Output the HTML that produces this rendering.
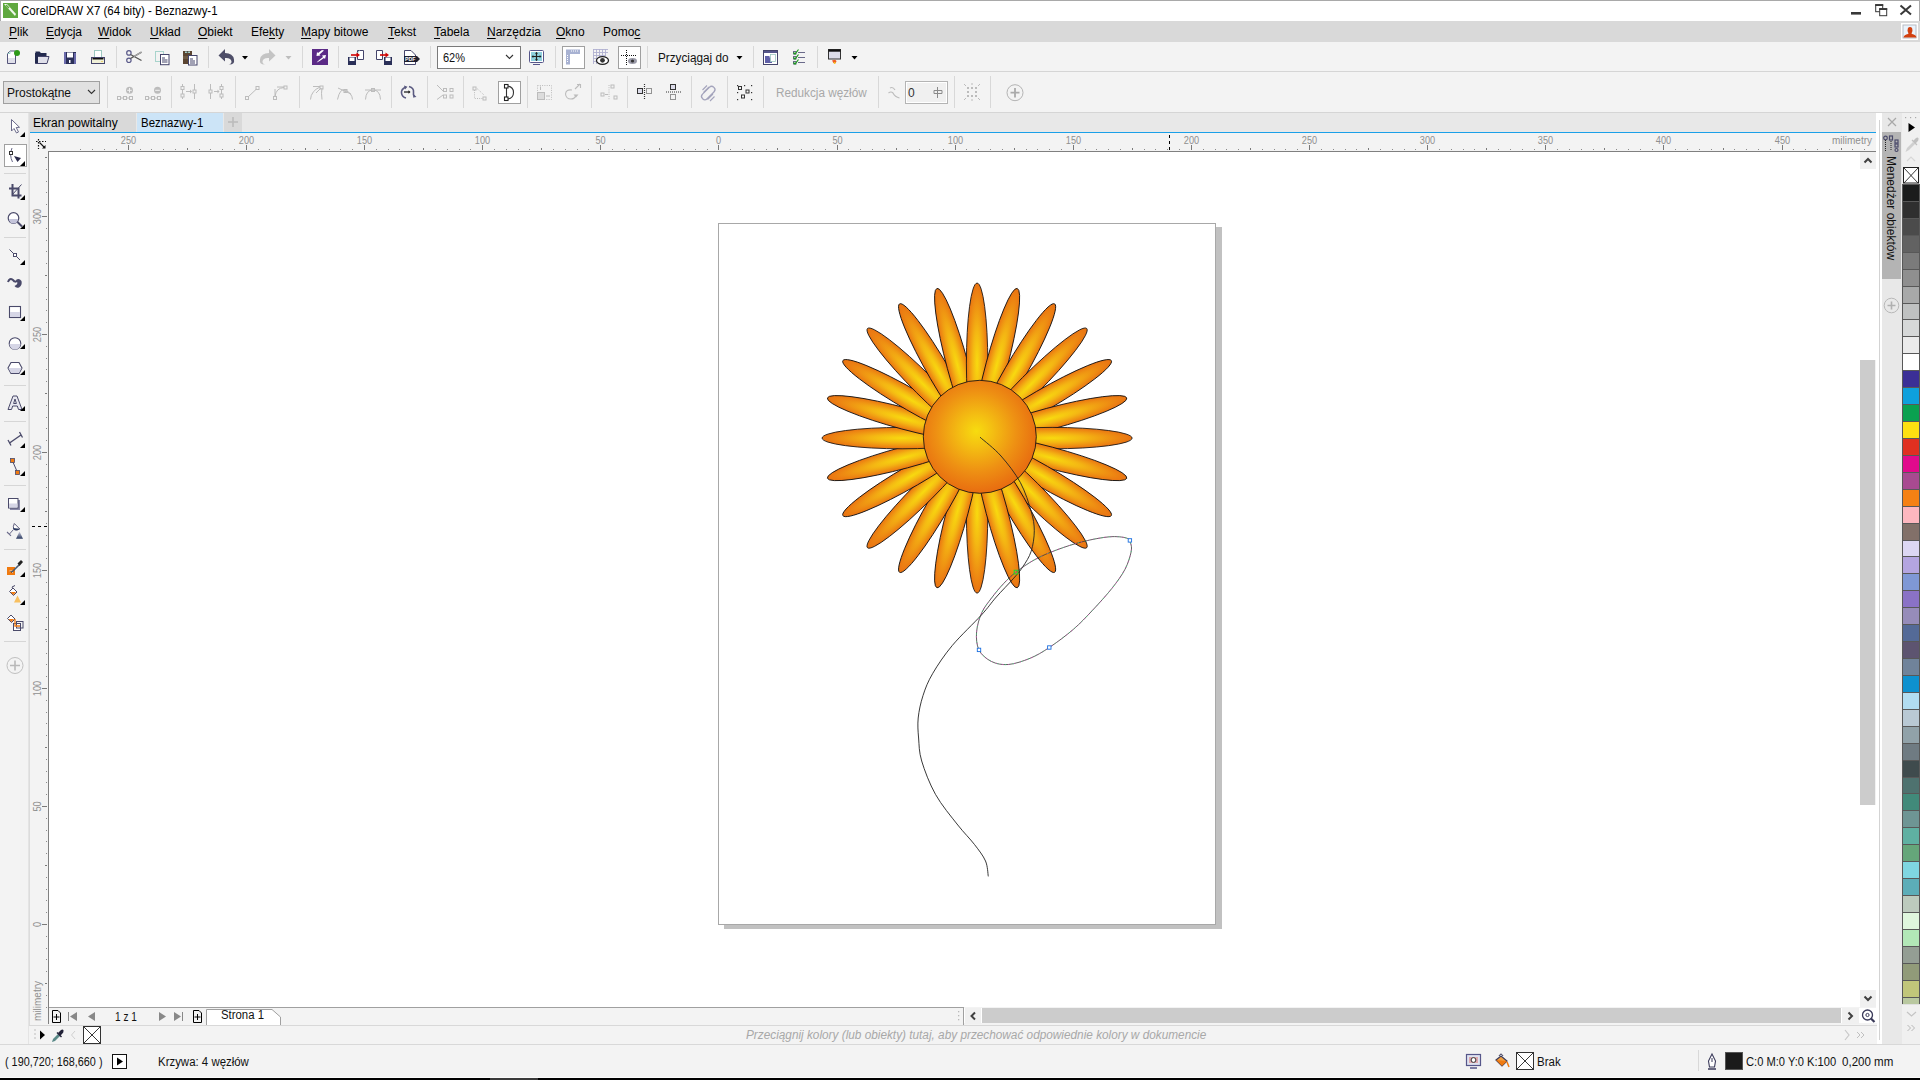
<!DOCTYPE html><html><head><meta charset="utf-8"><style>
html,body{margin:0;padding:0;}
body{width:1920px;height:1080px;position:relative;overflow:hidden;background:#f3f3f3;font-family:"Liberation Sans",sans-serif;font-size:12px;color:#000;}
body div,body span,body svg{position:absolute;}
.t{white-space:nowrap;line-height:1;}
u{text-decoration:underline;text-decoration-thickness:1px;text-underline-offset:2px;}
</style></head><body>
<div style="left:0px;top:0px;width:1920px;height:21px;background:#fff;"></div>
<div style="left:0px;top:0px;width:1920px;height:1px;background:#a9a9a9;"></div>
<div style="left:0px;top:0px;width:1px;height:21px;background:#a9a9a9;"></div>
<svg style="left:3px;top:3px;" width="16" height="16" viewBox="0 0 16 16"><rect x="0" y="0" width="15" height="15" fill="#5fa83f"/><path d="M1 1 L4 1 L13 11 L12 13 Z" fill="#fff" opacity="0.9"/><path d="M3 2 L6 5" stroke="#5fa83f" stroke-width="1.5"/></svg>
<span class="t" style="left:21px;top:5px;font-size:12px;transform:scaleX(0.956);transform-origin:0 0;">CorelDRAW X7 (64 bity) - Beznazwy-1</span>
<svg style="left:1840px;top:0px;" width="80" height="21" viewBox="0 0 80 21"><rect x="11" y="12" width="10" height="2.6" fill="#383838"/><rect x="35.7" y="4.7" width="7" height="7" fill="none" stroke="#383838"/><rect x="35.2" y="4.2" width="8" height="1.8" fill="#383838"/><rect x="39.7" y="8.7" width="7" height="7" fill="#fff" stroke="#383838"/><rect x="39.2" y="8.2" width="8" height="1.8" fill="#383838"/><path d="M60.5 5.5 L71 14.5 M71 5.5 L60.5 14.5" stroke="#383838" stroke-width="2"/></svg>
<div style="left:1919px;top:0px;width:1px;height:21px;background:#a9a9a9;"></div>
<div style="left:0px;top:21px;width:1920px;height:21px;background:#d9d9d9;"></div>
<span class="t" style="left:9px;top:26px;font-size:12px;"><u>P</u>lik</span>
<span class="t" style="left:46px;top:26px;font-size:12px;"><u>E</u>dycja</span>
<span class="t" style="left:98px;top:26px;font-size:12px;"><u>W</u>idok</span>
<span class="t" style="left:150px;top:26px;font-size:12px;"><u>U</u>kład</span>
<span class="t" style="left:198px;top:26px;font-size:12px;"><u>O</u>biekt</span>
<span class="t" style="left:251px;top:26px;font-size:12px;">Efe<u>k</u>ty</span>
<span class="t" style="left:301px;top:26px;font-size:12px;"><u>M</u>apy bitowe</span>
<span class="t" style="left:388px;top:26px;font-size:12px;"><u>T</u>ekst</span>
<span class="t" style="left:434px;top:26px;font-size:12px;"><u>T</u>abela</span>
<span class="t" style="left:487px;top:26px;font-size:12px;"><u>N</u>arzędzia</span>
<span class="t" style="left:556px;top:26px;font-size:12px;"><u>O</u>kno</span>
<span class="t" style="left:603px;top:26px;font-size:12px;">Pomo<u>c</u></span>
<svg style="left:1901px;top:23px;" width="17" height="17" viewBox="0 0 17 17"><rect x="0" y="0" width="17" height="17" fill="#fff"/><rect x="2" y="2" width="13" height="13" fill="#eaf2fb" stroke="#b8bcc4" stroke-width="1"/><ellipse cx="9" cy="7.2" rx="2.4" ry="3.2" fill="#d24010"/><path d="M2.5 14.5 Q3 11.5 7 11 L8 9.5 H10 L11 11 Q15 11.5 15.5 14.5 Z" fill="#d24010"/></svg>
<div style="left:0px;top:42px;width:1920px;height:29px;background:#f3f3f3;"></div>
<div style="left:0px;top:71px;width:1920px;height:1px;background:#d5d5d5;"></div>
<div style="left:116px;top:46px;width:1px;height:22px;background:#d8d8d8;"></div>
<div style="left:208px;top:46px;width:1px;height:22px;background:#d8d8d8;"></div>
<div style="left:302px;top:46px;width:1px;height:22px;background:#d8d8d8;"></div>
<div style="left:338px;top:46px;width:1px;height:22px;background:#d8d8d8;"></div>
<div style="left:430px;top:46px;width:1px;height:22px;background:#d8d8d8;"></div>
<div style="left:555px;top:46px;width:1px;height:22px;background:#d8d8d8;"></div>
<div style="left:647px;top:46px;width:1px;height:22px;background:#d8d8d8;"></div>
<div style="left:753px;top:46px;width:1px;height:22px;background:#d8d8d8;"></div>
<div style="left:817px;top:46px;width:1px;height:22px;background:#d8d8d8;"></div>
<div style="left:0px;top:72px;width:1920px;height:40px;background:#f3f3f3;"></div>
<div style="left:0px;top:112px;width:1920px;height:1px;background:#d5d5d5;"></div>
<div style="left:107px;top:76px;width:1px;height:32px;background:#d8d8d8;"></div>
<div style="left:171px;top:76px;width:1px;height:32px;background:#d8d8d8;"></div>
<div style="left:235px;top:76px;width:1px;height:32px;background:#d8d8d8;"></div>
<div style="left:299px;top:76px;width:1px;height:32px;background:#d8d8d8;"></div>
<div style="left:391px;top:76px;width:1px;height:32px;background:#d8d8d8;"></div>
<div style="left:427px;top:76px;width:1px;height:32px;background:#d8d8d8;"></div>
<div style="left:463px;top:76px;width:1px;height:32px;background:#d8d8d8;"></div>
<div style="left:527px;top:76px;width:1px;height:32px;background:#d8d8d8;"></div>
<div style="left:591px;top:76px;width:1px;height:32px;background:#d8d8d8;"></div>
<div style="left:627px;top:76px;width:1px;height:32px;background:#d8d8d8;"></div>
<div style="left:691px;top:76px;width:1px;height:32px;background:#d8d8d8;"></div>
<div style="left:727px;top:76px;width:1px;height:32px;background:#d8d8d8;"></div>
<div style="left:763px;top:76px;width:1px;height:32px;background:#d8d8d8;"></div>
<div style="left:878px;top:76px;width:1px;height:32px;background:#d8d8d8;"></div>
<div style="left:954px;top:76px;width:1px;height:32px;background:#d8d8d8;"></div>
<div style="left:990px;top:76px;width:1px;height:32px;background:#d8d8d8;"></div>
<div style="left:0px;top:113px;width:29px;height:931px;background:#f3f3f3;"></div>
<div style="left:28px;top:113px;width:1px;height:931px;background:#e4e4e4;"></div>
<div style="left:29px;top:113px;width:1848px;height:19px;background:#e8e8e8;"></div>
<div style="left:29px;top:113px;width:107px;height:19px;background:#d9d9d9;"></div>
<span class="t" style="left:33px;top:117px;">Ekran powitalny</span>
<div style="left:137px;top:113px;width:86px;height:19px;background:#cce4f7;"></div>
<span class="t" style="left:141px;top:117px;transform:scaleX(0.953);transform-origin:0 0;">Beznazwy-1</span>
<div style="left:224px;top:113px;width:18px;height:19px;background:#d9d9d9;"></div>
<svg style="left:227px;top:115px;" width="12" height="14" viewBox="0 0 12 14"><path d="M6 2 V12 M1 7 H11" stroke="#bbb" stroke-width="1.6"/></svg>
<div style="left:29px;top:132px;width:1848px;height:1px;background:#1aa0e8;"></div>
<div style="left:29px;top:133px;width:1848px;height:19px;background:#f3f3f3;"></div>
<div style="left:48px;top:151px;width:1829px;height:1px;background:#808080;"></div>
<div style="left:29px;top:152px;width:19px;height:873px;background:#f3f3f3;"></div>
<div style="left:29px;top:113px;width:1px;height:913px;background:#dcdcdc;"></div>
<div style="left:48px;top:151px;width:1px;height:873px;background:#808080;"></div>
<div style="left:49px;top:152px;width:1811px;height:855px;background:#fff;"></div>
<div style="left:1876px;top:113px;width:6px;height:931px;background:#fff;"></div>
<div style="left:1879px;top:120px;width:1px;height:920px;background:#d3d3d3;"></div>
<div style="left:49px;top:1007px;width:914px;height:1px;background:#a0a0a0;"></div>
<div style="left:49px;top:1008px;width:914px;height:17px;background:#f3f3f3;"></div>
<div style="left:29px;top:1025px;width:1848px;height:1px;background:#d8d8d8;"></div>
<div style="left:29px;top:1026px;width:1848px;height:18px;background:#f3f3f3;"></div>
<div style="left:0px;top:1044px;width:1920px;height:1px;background:#d8d8d8;"></div>
<div style="left:0px;top:1045px;width:1920px;height:33px;background:#f3f3f3;"></div>
<div style="left:0px;top:1077px;width:1920px;height:1px;background:#fbfbfb;"></div>
<div style="left:0px;top:1078px;width:1920px;height:2px;background:#000;"></div>
<div style="left:490px;top:1078px;width:48px;height:2px;background:#3a3a3a;"></div>
<svg style="left:0;top:0" width="1920" height="160" viewBox="0 0 1920 160"><g font-family="Liberation Sans" font-size="10" fill="#8f8f8f"><rect x="80" y="149" width="1" height="1" fill="#8a8a8a"/><rect x="92" y="149" width="1" height="1" fill="#8a8a8a"/><rect x="104" y="149" width="1" height="1" fill="#8a8a8a"/><rect x="116" y="149" width="1" height="1" fill="#8a8a8a"/><rect x="128" y="145" width="1" height="5" fill="#7a7a7a"/><text transform="translate(128.5 144) scale(0.92 1)" text-anchor="middle">250</text><rect x="140" y="149" width="1" height="1" fill="#8a8a8a"/><rect x="151" y="149" width="1" height="1" fill="#8a8a8a"/><rect x="163" y="149" width="1" height="1" fill="#8a8a8a"/><rect x="175" y="149" width="1" height="1" fill="#8a8a8a"/><rect x="187" y="148" width="1" height="2" fill="#7a7a7a"/><rect x="199" y="149" width="1" height="1" fill="#8a8a8a"/><rect x="210" y="149" width="1" height="1" fill="#8a8a8a"/><rect x="222" y="149" width="1" height="1" fill="#8a8a8a"/><rect x="234" y="149" width="1" height="1" fill="#8a8a8a"/><rect x="246" y="145" width="1" height="5" fill="#7a7a7a"/><text transform="translate(246.5 144) scale(0.92 1)" text-anchor="middle">200</text><rect x="258" y="149" width="1" height="1" fill="#8a8a8a"/><rect x="269" y="149" width="1" height="1" fill="#8a8a8a"/><rect x="281" y="149" width="1" height="1" fill="#8a8a8a"/><rect x="293" y="149" width="1" height="1" fill="#8a8a8a"/><rect x="305" y="148" width="1" height="2" fill="#7a7a7a"/><rect x="317" y="149" width="1" height="1" fill="#8a8a8a"/><rect x="329" y="149" width="1" height="1" fill="#8a8a8a"/><rect x="340" y="149" width="1" height="1" fill="#8a8a8a"/><rect x="352" y="149" width="1" height="1" fill="#8a8a8a"/><rect x="364" y="145" width="1" height="5" fill="#7a7a7a"/><text transform="translate(364.5 144) scale(0.92 1)" text-anchor="middle">150</text><rect x="376" y="149" width="1" height="1" fill="#8a8a8a"/><rect x="388" y="149" width="1" height="1" fill="#8a8a8a"/><rect x="399" y="149" width="1" height="1" fill="#8a8a8a"/><rect x="411" y="149" width="1" height="1" fill="#8a8a8a"/><rect x="423" y="148" width="1" height="2" fill="#7a7a7a"/><rect x="435" y="149" width="1" height="1" fill="#8a8a8a"/><rect x="447" y="149" width="1" height="1" fill="#8a8a8a"/><rect x="459" y="149" width="1" height="1" fill="#8a8a8a"/><rect x="470" y="149" width="1" height="1" fill="#8a8a8a"/><rect x="482" y="145" width="1" height="5" fill="#7a7a7a"/><text transform="translate(482.5 144) scale(0.92 1)" text-anchor="middle">100</text><rect x="494" y="149" width="1" height="1" fill="#8a8a8a"/><rect x="506" y="149" width="1" height="1" fill="#8a8a8a"/><rect x="518" y="149" width="1" height="1" fill="#8a8a8a"/><rect x="529" y="149" width="1" height="1" fill="#8a8a8a"/><rect x="541" y="148" width="1" height="2" fill="#7a7a7a"/><rect x="553" y="149" width="1" height="1" fill="#8a8a8a"/><rect x="565" y="149" width="1" height="1" fill="#8a8a8a"/><rect x="577" y="149" width="1" height="1" fill="#8a8a8a"/><rect x="588" y="149" width="1" height="1" fill="#8a8a8a"/><rect x="600" y="145" width="1" height="5" fill="#7a7a7a"/><text transform="translate(600.5 144) scale(0.92 1)" text-anchor="middle">50</text><rect x="612" y="149" width="1" height="1" fill="#8a8a8a"/><rect x="624" y="149" width="1" height="1" fill="#8a8a8a"/><rect x="636" y="149" width="1" height="1" fill="#8a8a8a"/><rect x="648" y="149" width="1" height="1" fill="#8a8a8a"/><rect x="659" y="148" width="1" height="2" fill="#7a7a7a"/><rect x="671" y="149" width="1" height="1" fill="#8a8a8a"/><rect x="683" y="149" width="1" height="1" fill="#8a8a8a"/><rect x="695" y="149" width="1" height="1" fill="#8a8a8a"/><rect x="707" y="149" width="1" height="1" fill="#8a8a8a"/><rect x="718" y="145" width="1" height="5" fill="#7a7a7a"/><text transform="translate(718.5 144) scale(0.92 1)" text-anchor="middle">0</text><rect x="730" y="149" width="1" height="1" fill="#8a8a8a"/><rect x="742" y="149" width="1" height="1" fill="#8a8a8a"/><rect x="754" y="149" width="1" height="1" fill="#8a8a8a"/><rect x="766" y="149" width="1" height="1" fill="#8a8a8a"/><rect x="777" y="148" width="1" height="2" fill="#7a7a7a"/><rect x="789" y="149" width="1" height="1" fill="#8a8a8a"/><rect x="801" y="149" width="1" height="1" fill="#8a8a8a"/><rect x="813" y="149" width="1" height="1" fill="#8a8a8a"/><rect x="825" y="149" width="1" height="1" fill="#8a8a8a"/><rect x="837" y="145" width="1" height="5" fill="#7a7a7a"/><text transform="translate(837.5 144) scale(0.92 1)" text-anchor="middle">50</text><rect x="848" y="149" width="1" height="1" fill="#8a8a8a"/><rect x="860" y="149" width="1" height="1" fill="#8a8a8a"/><rect x="872" y="149" width="1" height="1" fill="#8a8a8a"/><rect x="884" y="149" width="1" height="1" fill="#8a8a8a"/><rect x="896" y="148" width="1" height="2" fill="#7a7a7a"/><rect x="907" y="149" width="1" height="1" fill="#8a8a8a"/><rect x="919" y="149" width="1" height="1" fill="#8a8a8a"/><rect x="931" y="149" width="1" height="1" fill="#8a8a8a"/><rect x="943" y="149" width="1" height="1" fill="#8a8a8a"/><rect x="955" y="145" width="1" height="5" fill="#7a7a7a"/><text transform="translate(955.5 144) scale(0.92 1)" text-anchor="middle">100</text><rect x="966" y="149" width="1" height="1" fill="#8a8a8a"/><rect x="978" y="149" width="1" height="1" fill="#8a8a8a"/><rect x="990" y="149" width="1" height="1" fill="#8a8a8a"/><rect x="1002" y="149" width="1" height="1" fill="#8a8a8a"/><rect x="1014" y="148" width="1" height="2" fill="#7a7a7a"/><rect x="1026" y="149" width="1" height="1" fill="#8a8a8a"/><rect x="1037" y="149" width="1" height="1" fill="#8a8a8a"/><rect x="1049" y="149" width="1" height="1" fill="#8a8a8a"/><rect x="1061" y="149" width="1" height="1" fill="#8a8a8a"/><rect x="1073" y="145" width="1" height="5" fill="#7a7a7a"/><text transform="translate(1073.5 144) scale(0.92 1)" text-anchor="middle">150</text><rect x="1085" y="149" width="1" height="1" fill="#8a8a8a"/><rect x="1096" y="149" width="1" height="1" fill="#8a8a8a"/><rect x="1108" y="149" width="1" height="1" fill="#8a8a8a"/><rect x="1120" y="149" width="1" height="1" fill="#8a8a8a"/><rect x="1132" y="148" width="1" height="2" fill="#7a7a7a"/><rect x="1144" y="149" width="1" height="1" fill="#8a8a8a"/><rect x="1155" y="149" width="1" height="1" fill="#8a8a8a"/><rect x="1167" y="149" width="1" height="1" fill="#8a8a8a"/><rect x="1179" y="149" width="1" height="1" fill="#8a8a8a"/><rect x="1191" y="145" width="1" height="5" fill="#7a7a7a"/><text transform="translate(1191.5 144) scale(0.92 1)" text-anchor="middle">200</text><rect x="1203" y="149" width="1" height="1" fill="#8a8a8a"/><rect x="1215" y="149" width="1" height="1" fill="#8a8a8a"/><rect x="1226" y="149" width="1" height="1" fill="#8a8a8a"/><rect x="1238" y="149" width="1" height="1" fill="#8a8a8a"/><rect x="1250" y="148" width="1" height="2" fill="#7a7a7a"/><rect x="1262" y="149" width="1" height="1" fill="#8a8a8a"/><rect x="1274" y="149" width="1" height="1" fill="#8a8a8a"/><rect x="1285" y="149" width="1" height="1" fill="#8a8a8a"/><rect x="1297" y="149" width="1" height="1" fill="#8a8a8a"/><rect x="1309" y="145" width="1" height="5" fill="#7a7a7a"/><text transform="translate(1309.5 144) scale(0.92 1)" text-anchor="middle">250</text><rect x="1321" y="149" width="1" height="1" fill="#8a8a8a"/><rect x="1333" y="149" width="1" height="1" fill="#8a8a8a"/><rect x="1345" y="149" width="1" height="1" fill="#8a8a8a"/><rect x="1356" y="149" width="1" height="1" fill="#8a8a8a"/><rect x="1368" y="148" width="1" height="2" fill="#7a7a7a"/><rect x="1380" y="149" width="1" height="1" fill="#8a8a8a"/><rect x="1392" y="149" width="1" height="1" fill="#8a8a8a"/><rect x="1404" y="149" width="1" height="1" fill="#8a8a8a"/><rect x="1415" y="149" width="1" height="1" fill="#8a8a8a"/><rect x="1427" y="145" width="1" height="5" fill="#7a7a7a"/><text transform="translate(1427.5 144) scale(0.92 1)" text-anchor="middle">300</text><rect x="1439" y="149" width="1" height="1" fill="#8a8a8a"/><rect x="1451" y="149" width="1" height="1" fill="#8a8a8a"/><rect x="1463" y="149" width="1" height="1" fill="#8a8a8a"/><rect x="1474" y="149" width="1" height="1" fill="#8a8a8a"/><rect x="1486" y="148" width="1" height="2" fill="#7a7a7a"/><rect x="1498" y="149" width="1" height="1" fill="#8a8a8a"/><rect x="1510" y="149" width="1" height="1" fill="#8a8a8a"/><rect x="1522" y="149" width="1" height="1" fill="#8a8a8a"/><rect x="1534" y="149" width="1" height="1" fill="#8a8a8a"/><rect x="1545" y="145" width="1" height="5" fill="#7a7a7a"/><text transform="translate(1545.5 144) scale(0.92 1)" text-anchor="middle">350</text><rect x="1557" y="149" width="1" height="1" fill="#8a8a8a"/><rect x="1569" y="149" width="1" height="1" fill="#8a8a8a"/><rect x="1581" y="149" width="1" height="1" fill="#8a8a8a"/><rect x="1593" y="149" width="1" height="1" fill="#8a8a8a"/><rect x="1604" y="148" width="1" height="2" fill="#7a7a7a"/><rect x="1616" y="149" width="1" height="1" fill="#8a8a8a"/><rect x="1628" y="149" width="1" height="1" fill="#8a8a8a"/><rect x="1640" y="149" width="1" height="1" fill="#8a8a8a"/><rect x="1652" y="149" width="1" height="1" fill="#8a8a8a"/><rect x="1663" y="145" width="1" height="5" fill="#7a7a7a"/><text transform="translate(1663.5 144) scale(0.92 1)" text-anchor="middle">400</text><rect x="1675" y="149" width="1" height="1" fill="#8a8a8a"/><rect x="1687" y="149" width="1" height="1" fill="#8a8a8a"/><rect x="1699" y="149" width="1" height="1" fill="#8a8a8a"/><rect x="1711" y="149" width="1" height="1" fill="#8a8a8a"/><rect x="1723" y="148" width="1" height="2" fill="#7a7a7a"/><rect x="1734" y="149" width="1" height="1" fill="#8a8a8a"/><rect x="1746" y="149" width="1" height="1" fill="#8a8a8a"/><rect x="1758" y="149" width="1" height="1" fill="#8a8a8a"/><rect x="1770" y="149" width="1" height="1" fill="#8a8a8a"/><rect x="1782" y="145" width="1" height="5" fill="#7a7a7a"/><text transform="translate(1782.5 144) scale(0.92 1)" text-anchor="middle">450</text><rect x="1793" y="149" width="1" height="1" fill="#8a8a8a"/><rect x="1805" y="149" width="1" height="1" fill="#8a8a8a"/><rect x="1817" y="149" width="1" height="1" fill="#8a8a8a"/><rect x="1829" y="149" width="1" height="1" fill="#8a8a8a"/><rect x="1841" y="148" width="1" height="2" fill="#7a7a7a"/><rect x="1852" y="149" width="1" height="1" fill="#8a8a8a"/><rect x="1864" y="149" width="1" height="1" fill="#8a8a8a"/><text x="1872" y="144" text-anchor="end">milimetry</text></g></svg>
<svg style="left:1169px;top:135px" width="1" height="16"><path d="M0.5 0 V16" stroke="#000" stroke-width="1" stroke-dasharray="3,3"/></svg>
<svg style="left:0;top:0" width="60" height="1030" viewBox="0 0 60 1030"><g font-family="Liberation Sans" font-size="10" fill="#8f8f8f"><rect x="46" y="1007" width="1" height="1" fill="#8a8a8a"/><rect x="46" y="995" width="1" height="1" fill="#8a8a8a"/><rect x="45" y="983" width="2" height="1" fill="#7a7a7a"/><rect x="46" y="971" width="1" height="1" fill="#8a8a8a"/><rect x="46" y="959" width="1" height="1" fill="#8a8a8a"/><rect x="46" y="948" width="1" height="1" fill="#8a8a8a"/><rect x="46" y="936" width="1" height="1" fill="#8a8a8a"/><rect x="42" y="924" width="5" height="1" fill="#7a7a7a"/><text transform="translate(41 924.5) rotate(-90) scale(0.92 1)" text-anchor="middle">0</text><rect x="46" y="912" width="1" height="1" fill="#8a8a8a"/><rect x="46" y="900" width="1" height="1" fill="#8a8a8a"/><rect x="46" y="889" width="1" height="1" fill="#8a8a8a"/><rect x="46" y="877" width="1" height="1" fill="#8a8a8a"/><rect x="45" y="865" width="2" height="1" fill="#7a7a7a"/><rect x="46" y="853" width="1" height="1" fill="#8a8a8a"/><rect x="46" y="841" width="1" height="1" fill="#8a8a8a"/><rect x="46" y="830" width="1" height="1" fill="#8a8a8a"/><rect x="46" y="818" width="1" height="1" fill="#8a8a8a"/><rect x="42" y="806" width="5" height="1" fill="#7a7a7a"/><text transform="translate(41 806.5) rotate(-90) scale(0.92 1)" text-anchor="middle">50</text><rect x="46" y="794" width="1" height="1" fill="#8a8a8a"/><rect x="46" y="782" width="1" height="1" fill="#8a8a8a"/><rect x="46" y="771" width="1" height="1" fill="#8a8a8a"/><rect x="46" y="759" width="1" height="1" fill="#8a8a8a"/><rect x="45" y="747" width="2" height="1" fill="#7a7a7a"/><rect x="46" y="735" width="1" height="1" fill="#8a8a8a"/><rect x="46" y="723" width="1" height="1" fill="#8a8a8a"/><rect x="46" y="712" width="1" height="1" fill="#8a8a8a"/><rect x="46" y="700" width="1" height="1" fill="#8a8a8a"/><rect x="42" y="688" width="5" height="1" fill="#7a7a7a"/><text transform="translate(41 688.5) rotate(-90) scale(0.92 1)" text-anchor="middle">100</text><rect x="46" y="676" width="1" height="1" fill="#8a8a8a"/><rect x="46" y="664" width="1" height="1" fill="#8a8a8a"/><rect x="46" y="653" width="1" height="1" fill="#8a8a8a"/><rect x="46" y="641" width="1" height="1" fill="#8a8a8a"/><rect x="45" y="629" width="2" height="1" fill="#7a7a7a"/><rect x="46" y="617" width="1" height="1" fill="#8a8a8a"/><rect x="46" y="605" width="1" height="1" fill="#8a8a8a"/><rect x="46" y="594" width="1" height="1" fill="#8a8a8a"/><rect x="46" y="582" width="1" height="1" fill="#8a8a8a"/><rect x="42" y="570" width="5" height="1" fill="#7a7a7a"/><text transform="translate(41 570.5) rotate(-90) scale(0.92 1)" text-anchor="middle">150</text><rect x="46" y="558" width="1" height="1" fill="#8a8a8a"/><rect x="46" y="546" width="1" height="1" fill="#8a8a8a"/><rect x="46" y="535" width="1" height="1" fill="#8a8a8a"/><rect x="46" y="523" width="1" height="1" fill="#8a8a8a"/><rect x="45" y="511" width="2" height="1" fill="#7a7a7a"/><rect x="46" y="499" width="1" height="1" fill="#8a8a8a"/><rect x="46" y="487" width="1" height="1" fill="#8a8a8a"/><rect x="46" y="476" width="1" height="1" fill="#8a8a8a"/><rect x="46" y="464" width="1" height="1" fill="#8a8a8a"/><rect x="42" y="452" width="5" height="1" fill="#7a7a7a"/><text transform="translate(41 452.5) rotate(-90) scale(0.92 1)" text-anchor="middle">200</text><rect x="46" y="440" width="1" height="1" fill="#8a8a8a"/><rect x="46" y="428" width="1" height="1" fill="#8a8a8a"/><rect x="46" y="417" width="1" height="1" fill="#8a8a8a"/><rect x="46" y="405" width="1" height="1" fill="#8a8a8a"/><rect x="45" y="393" width="2" height="1" fill="#7a7a7a"/><rect x="46" y="381" width="1" height="1" fill="#8a8a8a"/><rect x="46" y="369" width="1" height="1" fill="#8a8a8a"/><rect x="46" y="358" width="1" height="1" fill="#8a8a8a"/><rect x="46" y="346" width="1" height="1" fill="#8a8a8a"/><rect x="42" y="334" width="5" height="1" fill="#7a7a7a"/><text transform="translate(41 334.5) rotate(-90) scale(0.92 1)" text-anchor="middle">250</text><rect x="46" y="322" width="1" height="1" fill="#8a8a8a"/><rect x="46" y="310" width="1" height="1" fill="#8a8a8a"/><rect x="46" y="299" width="1" height="1" fill="#8a8a8a"/><rect x="46" y="287" width="1" height="1" fill="#8a8a8a"/><rect x="45" y="275" width="2" height="1" fill="#7a7a7a"/><rect x="46" y="263" width="1" height="1" fill="#8a8a8a"/><rect x="46" y="251" width="1" height="1" fill="#8a8a8a"/><rect x="46" y="240" width="1" height="1" fill="#8a8a8a"/><rect x="46" y="228" width="1" height="1" fill="#8a8a8a"/><rect x="42" y="216" width="5" height="1" fill="#7a7a7a"/><text transform="translate(41 216.5) rotate(-90) scale(0.92 1)" text-anchor="middle">300</text><rect x="46" y="204" width="1" height="1" fill="#8a8a8a"/><rect x="46" y="192" width="1" height="1" fill="#8a8a8a"/><rect x="46" y="181" width="1" height="1" fill="#8a8a8a"/><rect x="46" y="169" width="1" height="1" fill="#8a8a8a"/><rect x="45" y="157" width="2" height="1" fill="#7a7a7a"/><text transform="translate(41 1021) rotate(-90)" text-anchor="start">milimetry</text></g></svg>
<svg style="left:32px;top:526px" width="16" height="1"><path d="M0 0.5 H16" stroke="#000" stroke-width="1" stroke-dasharray="3,3"/></svg>
<svg style="left:29px;top:133px;" width="19" height="18" viewBox="0 0 19 18"><g stroke="#111" stroke-width="1.2" stroke-dasharray="1.5,1.5"><path d="M9.5 6 V16"/><path d="M7 8.5 H17"/></g><path d="M10.5 9.5 L15.5 14.5" stroke="#111" stroke-width="1.1"/><path d="M16.5 15.5 L16.5 12 L13 15.5 Z" fill="#111"/></svg>
<svg style="left:0;top:0" width="1920" height="1080" viewBox="0 0 1920 1080"><rect x="1216" y="227" width="6" height="702" fill="#c1c1c1"/><rect x="724" y="925" width="498" height="4" fill="#c1c1c1"/><rect x="718.5" y="223.5" width="497" height="701" fill="#fff" stroke="#a8a8a8" stroke-width="1"/><defs><radialGradient id="pg" cx="0.5" cy="0.5" r="0.5" fx="0.5" fy="0.5" gradientUnits="objectBoundingBox"><stop offset="0" stop-color="#f8da0f"/><stop offset="0.4" stop-color="#f4b713"/><stop offset="1" stop-color="#ea7312"/></radialGradient><radialGradient id="cg" cx="0.47" cy="0.45" r="0.55"><stop offset="0" stop-color="#f7dc0f"/><stop offset="0.25" stop-color="#f4c012"/><stop offset="0.65" stop-color="#ee9013"/><stop offset="1" stop-color="#e86c10"/></radialGradient></defs><g transform="translate(977.1 438.1) rotate(90)"><ellipse cx="75" cy="0" rx="80" ry="10.7" fill="url(#pg)" stroke="#121212" stroke-width="0.85"/></g><g transform="translate(977.1 438.1) rotate(105)"><ellipse cx="75" cy="0" rx="80" ry="10.7" fill="url(#pg)" stroke="#121212" stroke-width="0.85"/></g><g transform="translate(977.1 438.1) rotate(120)"><ellipse cx="75" cy="0" rx="80" ry="10.7" fill="url(#pg)" stroke="#121212" stroke-width="0.85"/></g><g transform="translate(977.1 438.1) rotate(135)"><ellipse cx="75" cy="0" rx="80" ry="10.7" fill="url(#pg)" stroke="#121212" stroke-width="0.85"/></g><g transform="translate(977.1 438.1) rotate(150)"><ellipse cx="75" cy="0" rx="80" ry="10.7" fill="url(#pg)" stroke="#121212" stroke-width="0.85"/></g><g transform="translate(977.1 438.1) rotate(165)"><ellipse cx="75" cy="0" rx="80" ry="10.7" fill="url(#pg)" stroke="#121212" stroke-width="0.85"/></g><g transform="translate(977.1 438.1) rotate(180)"><ellipse cx="75" cy="0" rx="80" ry="10.7" fill="url(#pg)" stroke="#121212" stroke-width="0.85"/></g><g transform="translate(977.1 438.1) rotate(195)"><ellipse cx="75" cy="0" rx="80" ry="10.7" fill="url(#pg)" stroke="#121212" stroke-width="0.85"/></g><g transform="translate(977.1 438.1) rotate(210)"><ellipse cx="75" cy="0" rx="80" ry="10.7" fill="url(#pg)" stroke="#121212" stroke-width="0.85"/></g><g transform="translate(977.1 438.1) rotate(225)"><ellipse cx="75" cy="0" rx="80" ry="10.7" fill="url(#pg)" stroke="#121212" stroke-width="0.85"/></g><g transform="translate(977.1 438.1) rotate(240)"><ellipse cx="75" cy="0" rx="80" ry="10.7" fill="url(#pg)" stroke="#121212" stroke-width="0.85"/></g><g transform="translate(977.1 438.1) rotate(255)"><ellipse cx="75" cy="0" rx="80" ry="10.7" fill="url(#pg)" stroke="#121212" stroke-width="0.85"/></g><g transform="translate(977.1 438.1) rotate(270)"><ellipse cx="75" cy="0" rx="80" ry="10.7" fill="url(#pg)" stroke="#121212" stroke-width="0.85"/></g><g transform="translate(977.1 438.1) rotate(285)"><ellipse cx="75" cy="0" rx="80" ry="10.7" fill="url(#pg)" stroke="#121212" stroke-width="0.85"/></g><g transform="translate(977.1 438.1) rotate(300)"><ellipse cx="75" cy="0" rx="80" ry="10.7" fill="url(#pg)" stroke="#121212" stroke-width="0.85"/></g><g transform="translate(977.1 438.1) rotate(315)"><ellipse cx="75" cy="0" rx="80" ry="10.7" fill="url(#pg)" stroke="#121212" stroke-width="0.85"/></g><g transform="translate(977.1 438.1) rotate(330)"><ellipse cx="75" cy="0" rx="80" ry="10.7" fill="url(#pg)" stroke="#121212" stroke-width="0.85"/></g><g transform="translate(977.1 438.1) rotate(345)"><ellipse cx="75" cy="0" rx="80" ry="10.7" fill="url(#pg)" stroke="#121212" stroke-width="0.85"/></g><g transform="translate(977.1 438.1) rotate(360)"><ellipse cx="75" cy="0" rx="80" ry="10.7" fill="url(#pg)" stroke="#121212" stroke-width="0.85"/></g><g transform="translate(977.1 438.1) rotate(375)"><ellipse cx="75" cy="0" rx="80" ry="10.7" fill="url(#pg)" stroke="#121212" stroke-width="0.85"/></g><g transform="translate(977.1 438.1) rotate(390)"><ellipse cx="75" cy="0" rx="80" ry="10.7" fill="url(#pg)" stroke="#121212" stroke-width="0.85"/></g><g transform="translate(977.1 438.1) rotate(405)"><ellipse cx="75" cy="0" rx="80" ry="10.7" fill="url(#pg)" stroke="#121212" stroke-width="0.85"/></g><g transform="translate(977.1 438.1) rotate(420)"><ellipse cx="75" cy="0" rx="80" ry="10.7" fill="url(#pg)" stroke="#121212" stroke-width="0.85"/></g><g transform="translate(977.1 438.1) rotate(435)"><ellipse cx="75" cy="0" rx="80" ry="10.7" fill="url(#pg)" stroke="#121212" stroke-width="0.85"/></g><circle cx="979.8" cy="436.8" r="56.5" fill="url(#cg)" stroke="#121212" stroke-width="0.85"/><path d="M980.0 437.2 C983.5 440.3 994.3 448.4 1001.0 456.0 C1007.7 463.6 1015.4 473.4 1020.4 482.6 C1025.4 491.9 1028.9 503.5 1031.2 511.5 C1033.5 519.5 1034.3 524.1 1034.3 530.7 C1034.3 537.3 1033.1 545.2 1031.2 551.2 C1029.3 557.2 1025.8 562.2 1022.8 566.8 C1019.8 571.4 1017.5 573.9 1013.1 578.9 C1008.7 583.9 1001.6 591.0 996.3 597.0 C991.0 603.0 988.8 606.9 981.4 615.0 C974.0 623.1 960.3 635.9 952.2 645.6 C944.1 655.3 937.7 665.0 932.8 673.3 C927.9 681.6 925.4 688.1 923.0 695.6 C920.6 703.1 918.9 710.9 918.2 718.0 C917.5 725.1 918.0 730.8 918.6 738.0 C919.2 745.2 918.9 751.6 921.7 761.0 C924.5 770.4 929.5 783.7 935.5 794.4 C941.5 805.1 951.3 816.7 957.8 825.0 C964.3 833.3 969.8 838.4 974.4 844.4 C979.0 850.4 983.2 855.7 985.5 861.0 C987.8 866.3 987.8 873.8 988.3 876.4" fill="none" stroke="#222" stroke-width="0.9"/><path d="M1016.0 572.1 C1021.2 568.1 1028.0 563.3 1034.8 559.6 C1041.5 555.9 1048.5 553.0 1056.5 550.0 C1064.5 547.0 1074.2 543.8 1083.0 541.6 C1091.8 539.4 1102.2 537.4 1109.4 536.8 C1116.6 536.2 1122.8 537.0 1126.3 538.0 C1129.8 539.0 1129.7 540.7 1130.5 543.0 C1131.3 545.3 1132.0 547.6 1131.1 552.0 C1130.2 556.4 1128.2 563.2 1125.0 569.3 C1121.8 575.4 1117.2 581.7 1111.8 588.5 C1106.4 595.3 1099.0 603.4 1092.6 610.2 C1086.2 617.0 1080.5 623.2 1073.3 629.4 C1066.1 635.6 1056.5 642.7 1049.3 647.5 C1042.1 652.3 1036.8 655.5 1030.0 658.3 C1023.2 661.1 1014.7 664.0 1008.3 664.5 C1001.9 665.0 996.4 663.9 991.5 661.5 C986.6 659.1 981.5 655.0 979.0 650.0 C976.5 645.0 976.1 638.0 976.6 631.8 C977.1 625.6 979.3 618.2 981.8 612.6 C984.3 607.0 987.9 602.9 991.5 598.1 C995.1 593.3 999.4 588.0 1003.5 583.7 C1007.6 579.4 1010.8 576.1 1016.0 572.1 Z" fill="none" stroke="#3a3a3a" stroke-width="0.8"/><path d="M1016.0 572.1 C1021.2 568.1 1028.0 563.3 1034.8 559.6 C1041.5 555.9 1048.5 553.0 1056.5 550.0 C1064.5 547.0 1074.2 543.8 1083.0 541.6 C1091.8 539.4 1102.2 537.4 1109.4 536.8 C1116.6 536.2 1122.8 537.0 1126.3 538.0 C1129.8 539.0 1129.7 540.7 1130.5 543.0 C1131.3 545.3 1132.0 547.6 1131.1 552.0 C1130.2 556.4 1128.2 563.2 1125.0 569.3 C1121.8 575.4 1117.2 581.7 1111.8 588.5 C1106.4 595.3 1099.0 603.4 1092.6 610.2 C1086.2 617.0 1080.5 623.2 1073.3 629.4 C1066.1 635.6 1056.5 642.7 1049.3 647.5 C1042.1 652.3 1036.8 655.5 1030.0 658.3 C1023.2 661.1 1014.7 664.0 1008.3 664.5 C1001.9 665.0 996.4 663.9 991.5 661.5 C986.6 659.1 981.5 655.0 979.0 650.0 C976.5 645.0 976.1 638.0 976.6 631.8 C977.1 625.6 979.3 618.2 981.8 612.6 C984.3 607.0 987.9 602.9 991.5 598.1 C995.1 593.3 999.4 588.0 1003.5 583.7 C1007.6 579.4 1010.8 576.1 1016.0 572.1 Z" fill="none" stroke="#e040c0" stroke-width="0.8" stroke-dasharray="1,5"/><path d="M1016.0 572.1 C1021.2 568.1 1028.0 563.3 1034.8 559.6 C1041.5 555.9 1048.5 553.0 1056.5 550.0 C1064.5 547.0 1074.2 543.8 1083.0 541.6 C1091.8 539.4 1102.2 537.4 1109.4 536.8 C1116.6 536.2 1122.8 537.0 1126.3 538.0 C1129.8 539.0 1129.7 540.7 1130.5 543.0 C1131.3 545.3 1132.0 547.6 1131.1 552.0 C1130.2 556.4 1128.2 563.2 1125.0 569.3 C1121.8 575.4 1117.2 581.7 1111.8 588.5 C1106.4 595.3 1099.0 603.4 1092.6 610.2 C1086.2 617.0 1080.5 623.2 1073.3 629.4 C1066.1 635.6 1056.5 642.7 1049.3 647.5 C1042.1 652.3 1036.8 655.5 1030.0 658.3 C1023.2 661.1 1014.7 664.0 1008.3 664.5 C1001.9 665.0 996.4 663.9 991.5 661.5 C986.6 659.1 981.5 655.0 979.0 650.0 C976.5 645.0 976.1 638.0 976.6 631.8 C977.1 625.6 979.3 618.2 981.8 612.6 C984.3 607.0 987.9 602.9 991.5 598.1 C995.1 593.3 999.4 588.0 1003.5 583.7 C1007.6 579.4 1010.8 576.1 1016.0 572.1 Z" fill="none" stroke="#40e080" stroke-width="0.8" stroke-dasharray="1,7" stroke-dashoffset="3"/><rect x="1128.2" y="538.7" width="3.4" height="3.4" fill="#fff" stroke="#1a6fe0" stroke-width="0.9"/><rect x="1047.6" y="645.8" width="3.4" height="3.4" fill="#fff" stroke="#1a6fe0" stroke-width="0.9"/><rect x="977.3" y="648.2" width="3.4" height="3.4" fill="#fff" stroke="#1a6fe0" stroke-width="0.9"/><rect x="1014.2" y="570.3" width="3.6" height="3.6" fill="none" stroke="#30d030" stroke-width="1.1"/></svg>
<div style="left:1860px;top:152px;width:16px;height:855px;background:#fff;"></div>
<div style="left:1860px;top:152px;width:16px;height:17px;background:#f0f0f0;"></div>
<svg style="left:1860px;top:152px;" width="16" height="17" viewBox="0 0 16 17"><path d="M4.5 10.5 L8 7 L11.5 10.5" fill="none" stroke="#404040" stroke-width="2"/></svg>
<div style="left:1860px;top:360px;width:15px;height:445px;background:#cccccc;"></div>
<div style="left:1875px;top:360px;width:1px;height:445px;background:#f2f2f2;"></div>
<div style="left:1860px;top:990px;width:16px;height:17px;background:#f0f0f0;"></div>
<svg style="left:1860px;top:990px;" width="16" height="17" viewBox="0 0 16 17"><path d="M4.5 6.5 L8 10 L11.5 6.5" fill="none" stroke="#404040" stroke-width="2"/></svg>
<div style="left:963px;top:1007px;width:1px;height:18px;background:#a0a0a0;"></div>
<svg style="left:956px;top:1009px;" width="6" height="14" viewBox="0 0 6 14"><g fill="#b8b8b8"><rect x="2" y="2" width="1.3" height="1.3"/><rect x="2" y="6" width="1.3" height="1.3"/><rect x="2" y="10" width="1.3" height="1.3"/></g></svg>
<div style="left:964px;top:1008px;width:913px;height:15px;background:#fff;"></div>
<div style="left:964px;top:1023px;width:913px;height:2px;background:#f3f3f3;"></div>
<div style="left:965px;top:1008px;width:16px;height:16px;background:#f0f0f0;"></div>
<svg style="left:965px;top:1008px;" width="16" height="16" viewBox="0 0 16 16"><path d="M10 4.5 L6.5 8 L10 11.5" fill="none" stroke="#404040" stroke-width="2"/></svg>
<div style="left:982px;top:1008px;width:859px;height:15px;background:#cccccc;"></div>
<div style="left:1842px;top:1008px;width:17px;height:16px;background:#f0f0f0;"></div>
<svg style="left:1842px;top:1008px;" width="17" height="16" viewBox="0 0 17 16"><path d="M6.5 4.5 L10 8 L6.5 11.5" fill="none" stroke="#404040" stroke-width="2"/></svg>
<svg style="left:1860px;top:1008px;" width="17" height="17" viewBox="0 0 17 17"><circle cx="7.5" cy="7" r="5" fill="none" stroke="#3a3a5a" stroke-width="1.3"/><circle cx="7.5" cy="7" r="1.6" fill="none" stroke="#3a3a5a" stroke-width="1"/><path d="M11 10.5 L14.5 14" stroke="#3a3a5a" stroke-width="2.2"/></svg>
<div style="left:1882px;top:113px;width:20px;height:931px;background:#e8e8e8;"></div>
<svg style="left:1882px;top:113px;" width="20" height="19" viewBox="0 0 20 19"><path d="M6 5 L14 13 M14 5 L6 13" stroke="#a8a8a8" stroke-width="1.2"/></svg>
<div style="left:1882px;top:132px;width:19px;height:147px;background:#b4b4b4;"></div>
<svg style="left:1882px;top:134px;" width="20" height="20" viewBox="0 0 20 20"><g fill="none" stroke="#4a4a6a" stroke-width="1.2"><circle cx="3.5" cy="4" r="1.8"/><rect x="7.5" y="2" width="3" height="4"/><rect x="13" y="6" width="3" height="3"/><rect x="13" y="10" width="3" height="3"/><circle cx="14.5" cy="16" r="1.5"/></g><path d="M3.5 6 V17 M9 7 V17" stroke="#222" stroke-dasharray="1,1"/></svg>
<div style="left:1882px;top:155px;width:20px;height:110px;"><span class="t" style="left:0px;top:1px;transform-origin:0 0;transform:translate(15px,0) rotate(90deg);font-size:12px;color:#111;">Menedżer obiektów</span></div>
<svg style="left:1883px;top:297px;" width="17" height="17" viewBox="0 0 17 17"><circle cx="8.5" cy="8.5" r="7.3" fill="none" stroke="#b8b8b8" stroke-width="1"/><path d="M8.5 4.5 V12.5 M4.5 8.5 H12.5" stroke="#b0b0b0" stroke-width="1.6"/></svg>
<div style="left:1902px;top:113px;width:18px;height:931px;background:#f0f0f0;"></div>
<svg style="left:1903px;top:113px;" width="17" height="52" viewBox="0 0 17 52"><g fill="#aaa"><rect x="2" y="4" width="1.2" height="1.2"/><rect x="7" y="4" width="1.2" height="1.2"/><rect x="12" y="4" width="1.2" height="1.2"/></g><path d="M5.5 10 L12 14.5 L5.5 19 Z" fill="#000"/><path d="M2.5 39 L4 35 L10 29 L12 31 L6 37 Z" fill="#d0d0d0"/><path d="M10 28 L13 25 Q15 24 15.5 25.5 Q16 27 14 29 L12 31 Z" fill="#c0c0c0"/><path d="M9 27 L14 32" stroke="#c0c0c0" stroke-width="1.3"/><path d="M4 48 L8 44 L12 48" fill="none" stroke="#d8d8d8" stroke-width="1.2"/></svg>
<svg style="left:0;top:0" width="1920" height="1080" viewBox="0 0 1920 1080"><rect x="1903.5" y="167.5" width="15" height="15.5" fill="#fff" stroke="#222" stroke-width="1"/><path d="M1904 168 L1918 183 M1918 168 L1904 183" stroke="#222" stroke-width="0.9"/><rect x="1902" y="184.0" width="18" height="821.0" fill="#585858"/><rect x="1903" y="185" width="16" height="16" fill="#1b1c1c"/><rect x="1903" y="202" width="16" height="16" fill="#2f2f2f"/><rect x="1903" y="219" width="16" height="16" fill="#4b4b4b"/><rect x="1903" y="236" width="16" height="16" fill="#626262"/><rect x="1903" y="253" width="16" height="16" fill="#7b7b7b"/><rect x="1903" y="270" width="16" height="16" fill="#8f8f8f"/><rect x="1903" y="287" width="16" height="16" fill="#a8a9a9"/><rect x="1903" y="304" width="16" height="15" fill="#bfc1c1"/><rect x="1903" y="320" width="16" height="16" fill="#d6d8d8"/><rect x="1903" y="337" width="16" height="16" fill="#ebebeb"/><rect x="1903" y="354" width="16" height="16" fill="#ffffff"/><rect x="1903" y="371" width="16" height="16" fill="#3b2f96"/><rect x="1903" y="388" width="16" height="16" fill="#0ea0dc"/><rect x="1903" y="405" width="16" height="16" fill="#0aa150"/><rect x="1903" y="422" width="16" height="16" fill="#fde011"/><rect x="1903" y="439" width="16" height="16" fill="#e03020"/><rect x="1903" y="456" width="16" height="16" fill="#e10a8c"/><rect x="1903" y="473" width="16" height="16" fill="#a84a90"/><rect x="1903" y="490" width="16" height="16" fill="#f58114"/><rect x="1903" y="507" width="16" height="16" fill="#fdb7bf"/><rect x="1903" y="524" width="16" height="16" fill="#827069"/><rect x="1903" y="541" width="16" height="15" fill="#dcd7f3"/><rect x="1903" y="557" width="16" height="16" fill="#b4a5e0"/><rect x="1903" y="574" width="16" height="16" fill="#7f98d5"/><rect x="1903" y="591" width="16" height="16" fill="#8a72c6"/><rect x="1903" y="608" width="16" height="16" fill="#968cb9"/><rect x="1903" y="625" width="16" height="16" fill="#546a97"/><rect x="1903" y="642" width="16" height="16" fill="#5d5470"/><rect x="1903" y="659" width="16" height="16" fill="#70839a"/><rect x="1903" y="676" width="16" height="16" fill="#0e91cf"/><rect x="1903" y="693" width="16" height="16" fill="#b2ddf1"/><rect x="1903" y="710" width="16" height="16" fill="#b9c9d4"/><rect x="1903" y="727" width="16" height="16" fill="#91a2a9"/><rect x="1903" y="744" width="16" height="16" fill="#6f7b82"/><rect x="1903" y="761" width="16" height="16" fill="#3f4b4d"/><rect x="1903" y="778" width="16" height="15" fill="#4e726f"/><rect x="1903" y="794" width="16" height="16" fill="#418a7a"/><rect x="1903" y="811" width="16" height="16" fill="#6e9594"/><rect x="1903" y="828" width="16" height="16" fill="#5fb0a2"/><rect x="1903" y="845" width="16" height="16" fill="#65a67a"/><rect x="1903" y="862" width="16" height="16" fill="#7fd6e1"/><rect x="1903" y="879" width="16" height="16" fill="#5cadb8"/><rect x="1903" y="896" width="16" height="16" fill="#bccabd"/><rect x="1903" y="913" width="16" height="16" fill="#dff6dd"/><rect x="1903" y="930" width="16" height="16" fill="#b2e8b7"/><rect x="1903" y="947" width="16" height="16" fill="#949e94"/><rect x="1903" y="964" width="16" height="16" fill="#919b79"/><rect x="1903" y="981" width="16" height="16" fill="#c1c67a"/><rect x="1903" y="998" width="16" height="7" fill="#b9c8a0"/></svg>
<svg style="left:1903px;top:1005px;" width="17" height="39" viewBox="0 0 17 39"><path d="M4 7 L8.5 11 L13 7" fill="none" stroke="#c4c4c4" stroke-width="1.2"/><path d="M4.5 20 L7.5 23 L4.5 26 M8.5 20 L11.5 23 L8.5 26" fill="none" stroke="#b8b8b8" stroke-width="1"/></svg>
<div style="left:1902px;top:1004px;width:18px;height:1px;background:#e0e0e0;"></div>
<svg style="left:49px;top:1008px;" width="914" height="17" viewBox="0 0 914 17"><g fill="none" stroke="#000" stroke-width="1"><path d="M3.5 2.5 H9 L11.5 5 V14.5 H3.5 Z"/><path d="M7.5 6 V12 M4.5 9 H10.5"/></g><path d="M19.5 4 V13" stroke="#888"/><path d="M28 4 L21 8.5 L28 13 Z" fill="#888"/><path d="M46 4 L39 8.5 L46 13 Z" fill="#888"/><path d="M110 4 L117 8.5 L110 13 Z" fill="#888"/><path d="M125 4 L132 8.5 L125 13 Z" fill="#888"/><path d="M133.5 4 V13" stroke="#888"/><g fill="none" stroke="#000" stroke-width="1"><path d="M144.5 2.5 H150 L152.5 5 V14.5 H144.5 Z"/><path d="M148.5 6 V12 M145.5 9 H151.5"/></g><path d="M157.5 17 V1.5 H223 L231.5 9 V17" fill="#fff" stroke="#a0a0a0"/></svg>
<span class="t" style="left:115px;top:1011px;font-size:12px;color:#111;transform:scaleX(0.84);transform-origin:0 0;">1 z 1</span>
<span class="t" style="left:221px;top:1009px;font-size:12px;color:#111;transform:scaleX(0.948);transform-origin:0 0;">Strona 1</span>
<svg style="left:30px;top:1026px;" width="70" height="18" viewBox="0 0 70 18"><g fill="#aaa"><circle cx="5" cy="4" r="0.7"/><circle cx="5" cy="8" r="0.7"/><circle cx="5" cy="12" r="0.7"/></g><path d="M10 4.5 L15 9 L10 13.5 Z" fill="#000"/><path d="M22 16 L23 13 L28 8 L30 10 L25 15 Z" fill="#5a8a88"/><path d="M28 7 L31 4 Q33 3 33.5 4.5 Q34 6 32 8 L30 10 Z" fill="#222238"/><path d="M27 6.5 L31.5 11" stroke="#222238" stroke-width="1.4"/><path d="M45 5 L41.5 9 L45 13" fill="none" stroke="#d0d0d0" stroke-width="1"/></svg>
<svg style="left:83px;top:1026px;" width="18" height="18" viewBox="0 0 18 18"><rect x="0.5" y="0.5" width="17" height="17" fill="#fff" stroke="#333"/><path d="M1 1 L17 17 M17 1 L1 17" stroke="#222" stroke-width="0.9"/></svg>
<span class="t" style="left:746px;top:1029px;font-size:12px;font-style:italic;color:#a8a8a8;transform:scaleX(0.983);transform-origin:0 0;">Przeciągnij kolory (lub obiekty) tutaj, aby przechować odpowiednie kolory w dokumencie</span>
<svg style="left:1838px;top:1026px;" width="30" height="18" viewBox="0 0 30 18"><path d="M7 4 L11 9 L7 14" fill="none" stroke="#c8c8c8" stroke-width="1.2"/><path d="M19 6 L22 9 L19 12 M23 6 L26 9 L23 12" fill="none" stroke="#c0c0c0" stroke-width="1"/></svg>
<span class="t" style="left:5px;top:1056px;font-size:12px;color:#111;transform:scaleX(0.902);transform-origin:0 0;">( 190,720; 168,660 )</span>
<svg style="left:112px;top:1054px;" width="15" height="15" viewBox="0 0 15 15"><rect x="0.5" y="0.5" width="14" height="14" fill="#fff" stroke="#111"/><path d="M5 3.5 L11 7.5 L5 11.5 Z" fill="#000"/></svg>
<span class="t" style="left:158px;top:1056px;font-size:12px;color:#111;transform:scaleX(0.953);transform-origin:0 0;">Krzywa: 4 węzłów</span>
<svg style="left:1465px;top:1053px;" width="18" height="18" viewBox="0 0 18 18"><rect x="1.5" y="1.5" width="14" height="11" fill="#dfe3f0" stroke="#56568a" stroke-width="1.2"/><rect x="4" y="4" width="9" height="6" fill="#e08080" opacity="0.6"/><circle cx="8.5" cy="7" r="2.4" fill="#fff" stroke="#333"/><path d="M5 15 H12" stroke="#56568a" stroke-width="1.5"/></svg>
<svg style="left:1493px;top:1052px;" width="18" height="18" viewBox="0 0 18 18"><path d="M3 8 L8 4 L14 9 L9 14 Z" fill="#f0a040" stroke="#3a3a5a" stroke-width="1.2"/><path d="M3 8 L14 9 L9 14 Z" fill="#f07a10"/><path d="M6 4 Q8 0 10 4" fill="none" stroke="#3a3a5a"/><path d="M14 10 L16 15" stroke="#f07a10" stroke-width="1.5"/></svg>
<svg style="left:1516px;top:1052px;" width="18" height="18" viewBox="0 0 18 18"><rect x="0.5" y="0.5" width="17" height="17" fill="#fff" stroke="#333"/><path d="M1 1 L17 17 M17 1 L1 17" stroke="#222" stroke-width="0.9"/></svg>
<span class="t" style="left:1537px;top:1056px;font-size:12px;color:#111;transform:scaleX(0.958);transform-origin:0 0;">Brak</span>
<div style="left:1698px;top:1050px;width:1px;height:21px;background:#d8d8d8;"></div>
<svg style="left:1705px;top:1052px;" width="14" height="19" viewBox="0 0 14 19"><path d="M7 2 L10.5 9 L9.5 15 H4.5 L3.5 9 Z" fill="#fff" stroke="#3a3a5a" stroke-width="1.1"/><path d="M7 6 V10" stroke="#3a3a5a"/><path d="M3 17 H11" stroke="#3a3a5a" stroke-width="1.5"/></svg>
<div style="left:1725px;top:1052px;width:18px;height:18px;background:#1a1a1a;box-shadow:inset 0 0 0 1px #555;"></div>
<span class="t" style="left:1746px;top:1056px;font-size:12px;color:#111;transform:scaleX(0.928);transform-origin:0 0;">C:0 M:0 Y:0 K:100</span>
<span class="t" style="left:1842px;top:1056px;font-size:12px;color:#111;transform:scaleX(0.962);transform-origin:0 0;">0,200 mm</span>
<svg style="left:0;top:0" width="1920" height="700" viewBox="0 0 1920 700"><path d="M7.5 53.5 L10 51 H15.5 V63.5 H7.5 Z" fill="#fff" stroke="#55557a"/><rect x="8" y="58" width="7" height="5" fill="#e0e0ea"/><path d="M7.5 53.5 H10 V51" fill="none" stroke="#9ccfc8"/><circle cx="17" cy="53" r="3" fill="#2e9a1a"/><path d="M35.5 51.5 H39.5 L41 53 H46.5 V57 H35.5 Z" fill="#232a4e"/><path d="M35.5 57 V63.5 H47 L49 56.5 H37.5 L35.5 63.5" fill="#e0e0ea" stroke="#44446a"/><rect x="35" y="53" width="3" height="10" fill="#232a4e"/><rect x="64" y="52" width="12" height="12" fill="#2a2f58"/><rect x="64" y="52" width="2" height="12" fill="#6a6aaa"/><rect x="74" y="53" width="2" height="11" fill="#6a6aaa"/><rect x="67" y="52.5" width="6" height="5" fill="#fff"/><rect x="69" y="60" width="1.5" height="3" fill="#fff"/><rect x="94.5" y="50.5" width="7" height="7" fill="#fff" stroke="#9cc8c0"/><rect x="91.5" y="57.5" width="13" height="6" fill="#f0f0d8" stroke="#44446a"/><rect x="92.5" y="58" width="11" height="1.5" fill="#111"/><circle cx="102" cy="61.5" r="0.6" fill="#e0b000"/><circle cx="128.9" cy="52.9" r="2.2" fill="none" stroke="#5a5a8a" stroke-width="1.2"/><circle cx="128.9" cy="60.3" r="2.2" fill="none" stroke="#5a5a8a" stroke-width="1.2"/><path d="M130.5 54.5 L141.5 60.5 M130.5 58.5 L141.5 52.2" stroke="#555" stroke-width="1.4"/><path d="M134 56.5 L141.5 52.2" stroke="#a8a8a8" stroke-width="1.4"/><rect x="155.5" y="51.5" width="8" height="10" fill="#f3f3f3" stroke="#a8d4cc"/><rect x="160.5" y="54.5" width="8.5" height="10.2" fill="#fff" stroke="#44446a"/><path d="M162 58 H165 M162 60 H167.5 M162 62 H167.5" stroke="#44446a"/><rect x="183" y="51" width="9" height="13" fill="#5a4430"/><rect x="183" y="56" width="9" height="3" fill="#6e5a44"/><path d="M185 51.5 H190 V53 H185 Z" fill="#a8d4cc"/><circle cx="187.5" cy="52" r="0.8" fill="#333"/><rect x="188.5" y="55.5" width="8.5" height="9.5" fill="#fff" stroke="#44446a"/><path d="M190 59 H193 M190 61 H195 M190 63 H195" stroke="#44446a"/><path d="M225 49 L218.5 55.5 L225 61.5 V58 Q231 57.5 231.5 61.5 Q231.5 64 228.5 64.5 Q235 65 234 59.5 Q233 53 225 53 Z" fill="#4e4e68"/><path d="M242 56 H248 L245 59.5 Z" fill="#000"/><path d="M269 49 L275.5 55.5 L269 61.5 V58 Q263 57.5 262.5 61.5 Q262.5 64 265.5 64.5 Q259 65 260 59.5 Q261 53 269 53 Z" fill="#c4c4c4"/><path d="M285.5 56 H291.5 L288.5 59.5 Z" fill="#bdbdbd"/><rect x="312" y="49" width="16" height="16" fill="#5b2a86"/><path d="M316 63 Q320 59 323 57 L322 55.5 L326 55 L325 59 L324 58 Q320 61 316 63 Z" fill="#fff"/><path d="M324 50.5 L319.5 54.5 L320.5 55.5 L316.5 56 L317 52 L318 53 L322 50 Z" fill="#fff"/><path d="M357.5 50.5 H363.5 V59.5 H357.5 Z" fill="#fff" stroke="#44446a"/><path d="M359.5 50.5 L357.5 53" stroke="#9ccfc8"/><rect x="348" y="57" width="8" height="8" fill="#2a2f58"/><rect x="349.5" y="57.5" width="5" height="3.5" fill="#fff"/><path d="M351 55 H358" stroke="#d00000" stroke-width="1.6"/><path d="M356.5 52.5 L360 55 L356.5 57.5 Z" fill="#d00000"/><path d="M376.5 50.5 H382.5 V59.5 H376.5 Z" fill="#fff" stroke="#44446a"/><rect x="384" y="57" width="8" height="8" fill="#2a2f58"/><rect x="385.5" y="57.5" width="5" height="3.5" fill="#fff"/><path d="M380 55 H387" stroke="#d00000" stroke-width="1.6"/><path d="M385.5 52.5 L389 55 L385.5 57.5 Z" fill="#d00000"/><path d="M404.5 50.5 H411 L415.5 55 V64.5 H404.5 Z" fill="#fff" stroke="#44446a"/><path d="M404 56 H417 L420 59 L417 62 H404 Z" fill="#1e1e2e"/><text x="405" y="61.3" font-family="Liberation Sans" font-weight="bold" font-size="5.2" fill="#fff">PDF</text><rect x="437.5" y="46.5" width="83" height="22" fill="#fff" stroke="#7a7a7a"/><path d="M506 55 L509.5 58.5 L513 55" fill="none" stroke="#333" stroke-width="1.1"/><rect x="529.5" y="50.5" width="14" height="12" rx="1" fill="#fff" stroke="#56568a"/><rect x="531" y="52" width="11" height="9" fill="#8ed0de"/><path d="M533 64.5 H540" stroke="#56568a"/><path d="M536.5 52.5 V60.5 M532 56.5 H541" stroke="#222" stroke-width="1.2"/><path d="M536.5 52 L535 53.8 H538 Z M536.5 61 L535 59.2 H538 Z M531.5 56.5 L533.3 55 V58 Z M541.5 56.5 L539.7 55 V58 Z" fill="#222"/><rect x="562.5" y="46.5" width="22" height="22" fill="#fff" stroke="#a0a0a0"/><path d="M566 49.5 H580 V54 H570 V64.5 H566 Z" fill="#a8b2d2"/><path d="M571 51 H579 M567.5 55 V63" stroke="#fff" stroke-dasharray="1,1"/><g stroke="#b0b0d0" stroke-width="0.9"><path d="M593 49.5 H608 M593 52.5 H608 M593 55.5 H606 M593 58.5 H598 M593 61.5 H597 M593.5 49 V64 M596.5 49 V64 M599.5 49 V58 M602.5 49 V56 M605.5 49 V56"/></g><ellipse cx="602.5" cy="60.5" rx="6" ry="3.8" fill="#fff" stroke="#222" stroke-width="1.3"/><circle cx="602.5" cy="60.3" r="2.4" fill="#333"/><rect x="618.5" y="46.5" width="22" height="22" fill="#fff" stroke="#a0a0a0"/><path d="M626.5 50 V65 M621 55.5 H636" stroke="#111" stroke-dasharray="1,1"/><ellipse cx="632.5" cy="61" rx="4.5" ry="3" fill="#9a9aa8"/><circle cx="632.5" cy="61" r="1.6" fill="#333"/><path d="M736.5 56 H742.5 L739.5 59.5 Z" fill="#000"/><rect x="763.5" y="50.5" width="14" height="14" fill="#fff" stroke="#44446a"/><rect x="764" y="51" width="13" height="2" fill="#56568a"/><path d="M765 56 H769.5 V57.5 H772 V63 H765 Z" fill="#6060a8"/><rect x="770.5" y="54.5" width="5" height="7" fill="#fff" stroke="#9cc8c0" stroke-width="0.8"/><g stroke="#6a6a8a" stroke-width="1"><path d="M798 52.5 H805 M798 57.5 H805 M798 62.5 H805"/><rect x="793.5" y="51.5" width="2.5" height="2.5" fill="none"/><rect x="793.5" y="56.5" width="2.5" height="2.5" fill="none"/><rect x="793.5" y="61.5" width="2.5" height="2.5" fill="none"/></g><path d="M793.5 52.5 L795 54 L798.5 49.5 M793.5 57.5 L795 59 L798.5 54.5 M793.5 62.5 L795 64 L798.5 59.5" fill="none" stroke="#1e9a1e" stroke-width="1.2"/><rect x="828.5" y="49.5" width="12" height="9.5" fill="#dcdce8" stroke="#333"/><rect x="828.5" y="49.5" width="12" height="2.2" fill="#111"/><path d="M832 60 Q834.5 65 837 60 Q836 62 834.5 61 Z" fill="#e83020"/><circle cx="834.5" cy="61.5" r="1.8" fill="#f06020"/><circle cx="834.7" cy="63" r="1" fill="#f8c020"/><path d="M851.5 56 H857.5 L854.5 59.5 Z" fill="#000"/><rect x="3.5" y="81.5" width="96" height="22" fill="#e1e1e1" stroke="#a0a0a0"/><path d="M88 90 L91.5 93.5 L95 90" fill="none" stroke="#333" stroke-width="1.1"/><g fill="none" stroke="#bcbcbc"><rect x="117.5" y="96.5" width="3" height="3"/><rect x="123.5" y="96.5" width="3" height="3"/><rect x="129.5" y="96.5" width="3" height="3"/><path d="M120.5 98 H123.5 M126.5 98 H129.5"/></g><circle cx="129.5" cy="90.3" r="3.5" fill="#bcbcbc"/><path d="M129.5 88 V92.6 M127.2 90.3 H131.8" stroke="#f3f3f3" stroke-width="1"/><g fill="none" stroke="#bcbcbc"><rect x="145.5" y="96.5" width="3" height="3"/><rect x="151.5" y="96.5" width="3" height="3"/><rect x="157.5" y="96.5" width="3" height="3"/><path d="M148.5 98 H151.5 M154.5 98 H157.5"/></g><circle cx="157.5" cy="90.3" r="3.5" fill="#bcbcbc"/><path d="M155.2 90.3 H159.8" stroke="#f3f3f3" stroke-width="1"/><g fill="none" stroke="#bcbcbc"><path d="M182.5 84 V99 M194.5 84 V99"/><rect x="181" y="86.5" width="3" height="3" fill="#f3f3f3"/><rect x="181" y="94" width="3" height="3" fill="#f3f3f3"/><rect x="193" y="90" width="3" height="3" fill="#f3f3f3"/><path d="M186 91.5 H191"/></g><path d="M190 89.5 L192 91.5 L190 93.5 Z" fill="#bcbcbc"/><g fill="none" stroke="#bcbcbc"><path d="M210.5 84 V99 M221.5 84 V99"/><rect x="209" y="90" width="3" height="3" fill="#f3f3f3"/><rect x="220" y="86.5" width="3" height="3" fill="#f3f3f3"/><rect x="220" y="94" width="3" height="3" fill="#f3f3f3"/><path d="M214 91.5 H218"/></g><path d="M217.5 89.5 L219.5 91.5 L217.5 93.5 Z" fill="#bcbcbc"/><g fill="none" stroke="#bcbcbc"><rect x="245.5" y="96.5" width="3" height="3"/><rect x="256" y="86.5" width="3" height="3"/><path d="M248 97 L256.5 89"/></g><g fill="none" stroke="#bcbcbc"><rect x="273.5" y="96.5" width="3" height="3"/><rect x="284" y="86" width="3" height="3"/><path d="M275 96.5 Q276 88 284 87.5 M275 96 V89 M284 87 H277"/></g><g fill="none" stroke="#bcbcbc"><path d="M310.5 99.5 Q311 91 320 87 M322 99.5 Q321 93 322 88"/><rect x="320" y="86" width="3" height="3"/><path d="M313 86.5 H320 M321 88 L316 93"/></g><g fill="none" stroke="#bcbcbc"><path d="M337.5 99.5 Q340 88 345 90 Q352 93 352.5 99.5"/><rect x="344" y="89.5" width="3" height="3"/><path d="M338 88 L351 94"/></g><g fill="none" stroke="#bcbcbc"><path d="M365.5 99.5 Q366 90 373 90 Q380 90 380.5 99.5"/><rect x="371.5" y="88.5" width="3" height="3"/><path d="M365 90 H381"/></g><path d="M406 87 Q401 89 401.5 93 Q402 97 406 98" fill="none" stroke="#5a5a80" stroke-width="1.6"/><path d="M409 86.5 Q414 88 413.5 92 Q413 95 414.5 97" fill="none" stroke="#5a5a80" stroke-width="1.6"/><path d="M404 85.5 L407.5 86.8 L405 89.5 Z M413 97.5 L416.5 97 L414 94.5 Z" fill="#5a5a80"/><path d="M404 92 H409" stroke="#111" stroke-width="1.2"/><path d="M408.5 90.3 L410.5 92 L408.5 93.7 Z" fill="#111"/><g fill="none" stroke="#bcbcbc"><path d="M437 85 L443 91 M437 99.5 L443 95"/><rect x="443.5" y="88.5" width="3" height="3"/><rect x="443.5" y="95" width="3" height="3"/><rect x="450" y="88.5" width="3" height="3"/><rect x="450" y="95" width="3" height="3"/></g><g fill="none" stroke="#bcbcbc"><rect x="473" y="87" width="3" height="3"/><rect x="483" y="97" width="3" height="3"/><path d="M474.5 90 V98.5 H483 M477 88.5 L484 95" stroke-dasharray="1,1.2"/></g><rect x="498.5" y="81.5" width="22" height="22" fill="#fff" stroke="#a0a0a0"/><path d="M507 86 Q513.5 86.5 513.5 92.5 Q513.5 98.5 507 99" fill="none" stroke="#333" stroke-width="1.1"/><path d="M506.5 86 V99" stroke="#333" stroke-width="1.1"/><rect x="504.5" y="84.5" width="3.5" height="3.5" fill="#fff" stroke="#222" stroke-width="1.1"/><rect x="504.5" y="97" width="3.5" height="3.5" fill="#fff" stroke="#222" stroke-width="1.1"/><g fill="none" stroke="#bcbcbc"><rect x="537.5" y="85.5" width="14" height="14" stroke-dasharray="1,1.3"/><rect x="537.5" y="92.5" width="7" height="7" fill="#dcdcdc"/><path d="M540.5 90 V86.5 M546 96 H550"/></g><g fill="none" stroke="#bcbcbc" stroke-width="1.1"><path d="M572 90 Q566 89 565.5 94 Q566 99 571 99 Q575 99 576 95"/><path d="M575 89 L580 84 M577 84.5 H580.5 V88"/></g><path d="M573.5 94.5 H578.5 L576 97.5 Z" fill="#bcbcbc"/><g fill="none" stroke="#bcbcbc"><path d="M609 85 V100" stroke-dasharray="1,1.2"/><rect x="611" y="85" width="3" height="3"/><rect x="601" y="93" width="3" height="3"/><rect x="614" y="96" width="3" height="3"/><path d="M605 94.5 H608"/></g><g fill="none" stroke="#333"><rect x="637.5" y="88.5" width="5" height="5" fill="#dcdcea"/><rect x="646.5" y="88.5" width="5" height="5" stroke-dasharray="1,1"/><path d="M644.5 84 V100" stroke-width="1.2" stroke-dasharray="1,1"/></g><g fill="none" stroke="#333"><rect x="670.5" y="84.5" width="5" height="5" fill="#dcdcea"/><rect x="670.5" y="94.5" width="5" height="5" stroke-dasharray="1,1"/><path d="M666 92 H681" stroke-width="1.2" stroke-dasharray="1,1"/></g><rect x="705" y="85" width="6.5" height="16" rx="3.2" transform="rotate(45 708.2 93)" fill="none" stroke="#a4a4bc" stroke-width="1.3"/><path d="M702.5 90 L707 85.5 M703.5 92.5 L709 87 M707.5 99.5 L713 94 M710 101 L714.5 96.5" stroke="#a4a4bc" stroke-width="1.1"/><g fill="#333"><rect x="737" y="85" width="1.2" height="1.2"/><rect x="744" y="85" width="1.2" height="1.2"/><rect x="751" y="85" width="1.2" height="1.2"/><rect x="737" y="92" width="1.2" height="1.2"/><rect x="751" y="92" width="1.2" height="1.2"/><rect x="737" y="99" width="1.2" height="1.2"/><rect x="751" y="99" width="1.2" height="1.2"/></g><g fill="none" stroke="#333"><rect x="738.5" y="86.5" width="3" height="3"/><rect x="746" y="90" width="3" height="3"/><rect x="741.5" y="95" width="3" height="3"/></g><path d="M888.5 93 Q891 91 893 93 Q895 97 899.5 98 M890 88 Q893 86.5 895 90" fill="none" stroke="#bcbcbc" stroke-width="1.1"/><rect x="905.5" y="81.5" width="42" height="22" fill="#fff" stroke="#b4b4b4"/><rect x="907" y="83" width="39" height="19" fill="#f0f0f0"/><path d="M937.5 87 V98 M934 90.5 H942 V93.5 H934 Z" fill="none" stroke="#8a8a8a" stroke-width="1"/><g fill="#bcbcbc"><rect x="967" y="87" width="2" height="2"/><rect x="971" y="87" width="2" height="2"/><rect x="975" y="87" width="2" height="2"/><rect x="967" y="91" width="2" height="2"/><rect x="975" y="91" width="2" height="2"/><rect x="967" y="95" width="2" height="2"/><rect x="971" y="95" width="2" height="2"/><rect x="975" y="95" width="2" height="2"/></g><path d="M964 84 L966 86 M980 84 L978 86 M964 100 L966 98 M980 100 L978 98 M972 83 V85 M972 99 V101" stroke="#bcbcbc"/><circle cx="1015" cy="92.7" r="8" fill="none" stroke="#b4b4b4" stroke-width="1"/><path d="M1015 88 V97.5 M1010.5 92.7 H1019.5" stroke="#aaa" stroke-width="1.8"/><path d="M11.5 119.5 V131 L14 128.5 L16.5 133 L18.5 132 L16.2 127.5 L19.5 127.3 Z" fill="#fff" stroke="#6a6a8a" stroke-width="1"/><path d="M20 137 L25 132 L25 137 Z" fill="#000"/><rect x="4.5" y="144.5" width="22" height="22" fill="#fff" stroke="#a0a0a0"/><path d="M12 148 Q9 155 12.5 162" fill="none" stroke="#6a6a8a" stroke-width="1"/><rect x="9.5" y="151.5" width="3" height="3" fill="#fff" stroke="#333"/><path d="M14 156 L21 158 L17.5 162 Z" fill="#2a2a4a"/><path d="M20 166 L25 161 L25 166 Z" fill="#000"/><path d="M12.5 184 V195.5 H21.5 M9 188.5 H18.5 V198.5" fill="none" stroke="#4a4a6a" stroke-width="2"/><path d="M12 195 L21.5 184.5" stroke="#4a4a6a" stroke-width="1"/><path d="M20 200 L25 195 L25 200 Z" fill="#000"/><circle cx="13.5" cy="218" r="5.3" fill="#fff" stroke="#4a4a6a" stroke-width="1.2"/><path d="M9 219 H18 A4.5 4.5 0 0 1 9 219 Z" fill="#c4c4da"/><path d="M17.5 222 L22 226.5" stroke="#4a4a6a" stroke-width="2"/><path d="M20 229 L25 224 L25 229 Z" fill="#000"/><path d="M9.5 249.5 L20 260" stroke="#4a4a6a" stroke-width="1"/><rect x="13.5" y="253.5" width="3" height="3" fill="#fff" stroke="#4a4a6a"/><path d="M20 265 L25 260 L25 265 Z" fill="#000"/><path d="M8 282 Q9.5 277.5 13 280 Q15.5 283 17 280.5" fill="none" stroke="#4a4a6a" stroke-width="2"/><path d="M16 280 Q19 277.5 21.5 281 Q22.5 285 19 287.5 Q16 288.5 14.5 286 Q17 285 17.5 283 Z" fill="#4a4a6a"/><rect x="9.5" y="306.5" width="11" height="11" fill="#fff" stroke="#4a4a6a" stroke-width="1.1"/><rect x="10" y="312" width="10" height="5" fill="#d6d6e6"/><path d="M20 321 L25 316 L25 321 Z" fill="#000"/><circle cx="15" cy="343.5" r="5.8" fill="#fff" stroke="#4a4a6a" stroke-width="1.1"/><path d="M9.5 344 H20.5 A5.5 5.5 0 0 1 9.5 344 Z" fill="#d6d6e6"/><path d="M20 349 L25 344 L25 349 Z" fill="#000"/><path d="M11 362.5 H19 L22 368 L19 373.5 H11 L8 368 Z" fill="#fff" stroke="#4a4a6a" stroke-width="1.1"/><path d="M8.5 368 H21.5 L19 373 H11 Z" fill="#d6d6e6"/><path d="M20 375 L25 370 L25 375 Z" fill="#000"/><path d="M8 409.5 L13 396 H17 L22 409.5 H18.5 L17.3 406 H12.7 L11.5 409.5 Z M13.6 403.5 H16.4 L15 399 Z" fill="#e8e8f0" stroke="#4a4a6a" stroke-width="1"/><path d="M20 411 L25 406 L25 411 Z" fill="#000"/><path d="M9.5 443 L21 435" stroke="#4a4a6a" stroke-width="1.5"/><path d="M8 440 L11 445.5 M19.5 432 L22.5 437.5" stroke="#4a4a6a" stroke-width="1.3"/><path d="M20 448 L25 443 L25 448 Z" fill="#000"/><path d="M12.5 461 L17.5 472.5" stroke="#4a4a6a"/><rect x="10.5" y="458.5" width="4" height="4" fill="#f07a10" stroke="#4a4a6a" stroke-width="0.8"/><rect x="15.5" y="470.5" width="4" height="4" fill="#f07a10" stroke="#4a4a6a" stroke-width="0.8"/><path d="M20 476 L25 471 L25 476 Z" fill="#000"/><rect x="10" y="500" width="10" height="10" fill="#8a8aa8"/><rect x="8.5" y="498.5" width="9.5" height="9.5" fill="#fff" stroke="#4a4a6a"/><rect x="9" y="503.5" width="8.5" height="4" fill="#d6d6e6"/><path d="M20 512 L25 507 L25 512 Z" fill="#000"/><defs><linearGradient id="tg" x1="0" y1="0" x2="0" y2="1"><stop offset="0" stop-color="#d0d0e0"/><stop offset="1" stop-color="#2a3a60"/></linearGradient></defs><path d="M14.3 523.5 L19.8 529 Q17 531 14 529.5 Q12.5 527 14.3 523.5 Z" fill="#fff" stroke="#5a5a7a" stroke-width="1"/><path d="M12.8 528 L19.8 528.8 Q17 531.2 14 529.8 Z" fill="#2a3a60"/><path d="M13.5 529.5 L9.5 534" stroke="#6a6a8a" stroke-width="1"/><path d="M7 532 L11 535.8" stroke="#6a6a8a" stroke-width="1.1"/><path d="M16 538.7 L19.5 531.5 L23 538.7 Z" fill="url(#tg)"/><rect x="7" y="567" width="8" height="8" fill="#f07a10"/><path d="M9.5 571 H12.5 V573" stroke="#fff" stroke-width="0.8"/><path d="M12 572 L19 565" stroke="#4a5a70" stroke-width="1.6"/><path d="M17.5 563.5 L21 560 L23 562 L19.5 566 Z" fill="#222"/><path d="M20 577 L25 572 L25 577 Z" fill="#000"/><path d="M9.5 591.5 L13 588 L17 592 L13.5 595.5 Z" fill="#fff" stroke="#4a4a6a"/><path d="M10.5 592 L13.5 595 L16 592 Z" fill="#f07a10"/><path d="M12 588 L13 586 M13.5 587 L14.5 585" stroke="#4a4a6a"/><path d="M14 602.5 L17.5 595.5 L21 602.5 Z" fill="#f8c060"/><path d="M20 605 L25 600 L25 605 Z" fill="#000"/><path d="M7.5 618.5 L11 615 L15 619 L11.5 622.5 Z" fill="#fff" stroke="#4a4a6a"/><path d="M8.5 619 L11.5 622 L14 619 Z" fill="#f07a10"/><rect x="13.5" y="623.5" width="7" height="7" fill="#fff" stroke="#4a4a6a"/><rect x="16.5" y="621.5" width="6.5" height="6.5" fill="none" stroke="#4a4a6a"/><path d="M15 619 V626 H20" fill="none" stroke="#f07a10" stroke-width="1.3"/><circle cx="15" cy="665.5" r="8" fill="none" stroke="#c0c0c0"/><path d="M15 660.5 V670.5 M10 665.5 H20" stroke="#b8b8b8" stroke-width="1.6"/><rect x="4" y="173" width="22" height="1" fill="#d6d6d6"/><rect x="4" y="237" width="22" height="1" fill="#d6d6d6"/><rect x="4" y="385" width="22" height="1" fill="#d6d6d6"/><rect x="4" y="421" width="22" height="1" fill="#d6d6d6"/><rect x="4" y="485" width="22" height="1" fill="#d6d6d6"/><rect x="4" y="549" width="22" height="1" fill="#d6d6d6"/><rect x="4" y="641" width="22" height="1" fill="#d6d6d6"/></svg>
<span class="t" style="left:443px;top:52px;font-size:12px;color:#111;transform:scaleX(0.917);transform-origin:0 0;">62%</span>
<span class="t" style="left:658px;top:52px;font-size:12px;color:#111;transform:scaleX(0.979);transform-origin:0 0;">Przyciągaj do</span>
<span class="t" style="left:7px;top:87px;font-size:12px;color:#111;">Prostokątne</span>
<span class="t" style="left:776px;top:87px;font-size:12px;color:#a8a8a8;transform:scaleX(0.978);transform-origin:0 0;">Redukcja węzłów</span>
<span class="t" style="left:908px;top:87px;font-size:12px;color:#333;">0</span>
</body></html>
